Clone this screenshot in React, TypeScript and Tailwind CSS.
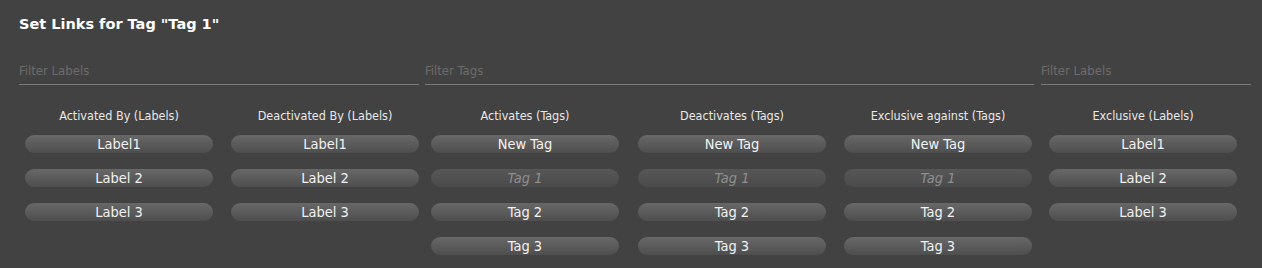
import React from 'react';

type Item = { text: string; disabled?: boolean };

const labels: Item[] = [{ text: 'Label1' }, { text: 'Label 2' }, { text: 'Label 3' }];
const tags: Item[] = [
  { text: 'New Tag' },
  { text: 'Tag 1', disabled: true },
  { text: 'Tag 2' },
  { text: 'Tag 3' },
];

const columns = [
  { title: 'Activated By (Labels)', items: labels, ml: 'ml-[25px]' },
  { title: 'Deactivated By (Labels)', items: labels, ml: 'ml-[18px]' },
  { title: 'Activates (Tags)', items: tags, ml: 'ml-[12px]' },
  { title: 'Deactivates (Tags)', items: tags, ml: 'ml-[19px]' },
  { title: 'Exclusive against (Tags)', items: tags, ml: 'ml-[18px]' },
  { title: 'Exclusive (Labels)', items: labels, ml: 'ml-[17px]' },
];

function FilterInput({ placeholder, width }: { placeholder: string; width: string }) {
  return (
    <input
      className={`${width} h-[25px] bg-transparent border-b border-[#7a7a7a] text-[13px] text-[#ddd] placeholder:text-[#6c6c6c] outline-none pb-[3px]`}
      placeholder={placeholder}
    />
  );
}

function LinkButton({ item }: { item: Item }) {
  if (item.disabled) {
    return (
      <div className="h-[18px] rounded-full bg-gradient-to-b from-[#575757] to-[#4a4a4a] flex items-center justify-center text-[14.5px] italic text-[#8e8e8e] leading-none">
        {item.text}
      </div>
    );
  }
  return (
    <div className="h-[18px] rounded-full bg-gradient-to-b from-[#686868] to-[#4e4e4e] flex items-center justify-center text-[14.5px] text-[#f2f2f2] leading-none">
      {item.text}
    </div>
  );
}

export default function App() {
  return (
    <div
      className="w-[1262px] h-[268px] bg-[#424242] overflow-hidden"
      style={{ fontFamily: '"DejaVu Sans Condensed", "DejaVu Sans", sans-serif' }}
    >
      <h1 className="pt-[15px] pl-[19px] text-[14.5px] font-bold text-white leading-[18px] font-['DejaVu_Sans',sans-serif]">
        Set Links for Tag "Tag 1"
      </h1>
      <div className="flex mt-[27px] pl-[19px]">
        <FilterInput placeholder="Filter Labels" width="w-[400px]" />
        <div className="w-[6px]" />
        <FilterInput placeholder="Filter Tags" width="w-[609px]" />
        <div className="w-[7px]" />
        <FilterInput placeholder="Filter Labels" width="w-[210px]" />
      </div>
      <div className="flex mt-[24px]">
        {columns.map((col) => (
          <div key={col.title} className={`${col.ml} w-[188px] flex flex-col`}>
            <div className="text-center text-[12.5px] text-[#e8e8e8] leading-[14px] mb-[12px]">
              {col.title}
            </div>
            <div className="flex flex-col gap-[16px]">
              {col.items.map((it) => (
                <LinkButton key={it.text} item={it} />
              ))}
            </div>
          </div>
        ))}
      </div>
    </div>
  );
}
